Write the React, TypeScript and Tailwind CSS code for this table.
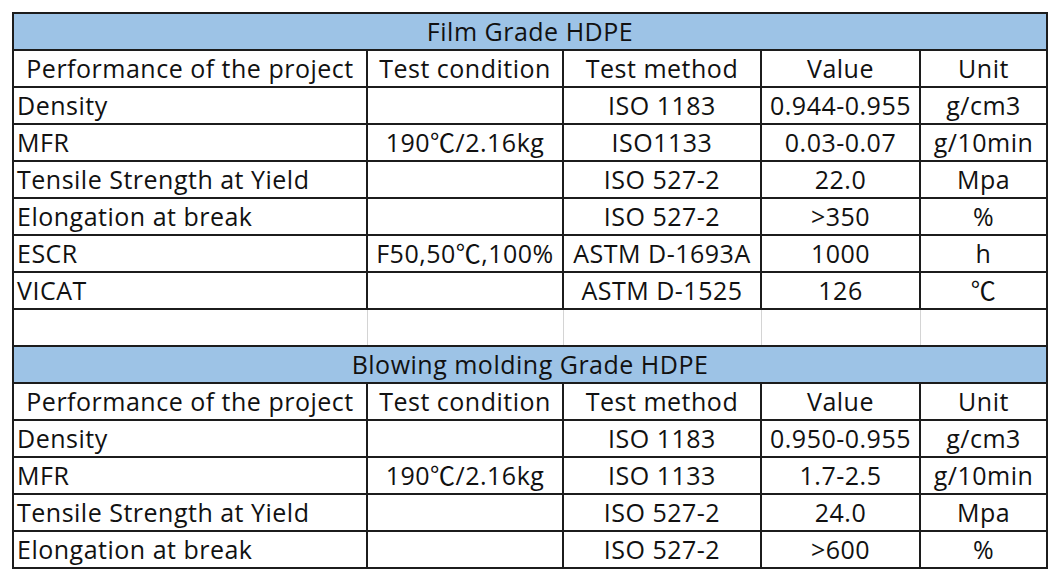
import React from 'react';

type Row = [string, string, string, string, string];

const film: Row[] = [
  ['Density', '', 'ISO 1183', '0.944-0.955', 'g/cm3'],
  ['MFR', '190℃/2.16kg', 'ISO1133', '0.03-0.07', 'g/10min'],
  ['Tensile Strength at Yield', '', 'ISO 527-2', '22.0', 'Mpa'],
  ['Elongation at break', '', 'ISO 527-2', '>350', '%'],
  ['ESCR', 'F50,50℃,100%', 'ASTM D-1693A', '1000', 'h'],
  ['VICAT', '', 'ASTM D-1525', '126', '℃'],
];

const blowing: Row[] = [
  ['Density', '', 'ISO 1183', '0.950-0.955', 'g/cm3'],
  ['MFR', '190℃/2.16kg', 'ISO 1133', '1.7-2.5', 'g/10min'],
  ['Tensile Strength at Yield', '', 'ISO 527-2', '24.0', 'Mpa'],
  ['Elongation at break', '', 'ISO 527-2', '>600', '%'],
];

const head: Row = ['Performance of the project', 'Test condition', 'Test method', 'Value', 'Unit'];

const cell = 'h-[37px] border-2 border-[#1c1c1c] p-0 align-bottom pb-[2px] whitespace-nowrap leading-[32px]';

const TitleRow: React.FC<{ text: string }> = ({ text }) => (
  <tr>
    <td colSpan={5} className={`${cell} bg-[#9dc3e6] text-center`}>
      {text}
    </td>
  </tr>
);

const HeadRow: React.FC = () => (
  <tr>
    {head.map((h, i) => (
      <td key={i} className={`${cell} text-center`}>
        {h}
      </td>
    ))}
  </tr>
);

const DataRow: React.FC<{ row: Row }> = ({ row }) => (
  <tr>
    {row.map((v, i) => (
      <td key={i} className={`${cell} ${i === 0 ? 'text-left pl-[3px]' : 'text-center'}`}>
        {v}
      </td>
    ))}
  </tr>
);

export default function App() {
  return (
    <div className="w-[1060px] h-[580px] bg-white pt-[12px] pl-[12px]">
      <table
        className="table-fixed border-collapse text-[#111] text-[25px] tracking-[0.5px]"
        style={{ fontFamily: '"Open Sans", "Noto Sans CJK SC", sans-serif', width: 1036 }}
      >
        <colgroup>
          <col className="w-[354px]" />
          <col className="w-[196px]" />
          <col className="w-[198px]" />
          <col className="w-[159px]" />
          <col className="w-[127px]" />
        </colgroup>
        <tbody>
          <TitleRow text="Film Grade HDPE" />
          <HeadRow />
          {film.map((r, i) => (
            <DataRow key={i} row={r} />
          ))}
          <tr>
            {[0, 1, 2, 3, 4].map((i) => (
              <td
                key={i}
                className="h-[37px] p-0 border-x border-x-[#d4d4d4] border-y-2 border-y-[#1c1c1c] first:border-l-2 first:border-l-[#1c1c1c] last:border-r-2 last:border-r-[#1c1c1c]"
              />
            ))}
          </tr>
          <TitleRow text="Blowing molding Grade HDPE" />
          <HeadRow />
          {blowing.map((r, i) => (
            <DataRow key={i} row={r} />
          ))}
        </tbody>
      </table>
    </div>
  );
}
